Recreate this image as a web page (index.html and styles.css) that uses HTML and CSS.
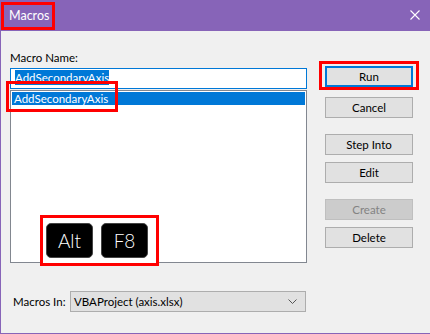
FILE: index.html
```html
<!DOCTYPE html>
<html>
<head>
    <title>Macros</title>
    <link rel="stylesheet" href="styles.css">
</head>
<body>
    <div class="window">
        <div class="titlebar">
            <span class="title">Macros</span>
            <svg class="close" width="10" height="10" viewBox="0 0 10 10">
                <path d="M0.5 0.5 L9.5 9.5 M9.5 0.5 L0.5 9.5" stroke="#fff" stroke-width="1.1" fill="none"/>
            </svg>
        </div>

        <div class="content">
            <div class="main">
                <div class="left">
                    <div class="field-label">Macro Name:</div>
                    <div class="name-input"><span class="selected-text">AddSecondaryAxis</span></div>
                    <div class="listbox">
                        <div class="list-item selected">AddSecondaryAxis</div>
                        <div class="keys">
                            <span class="key">Alt</span>
                            <span class="key">F8</span>
                        </div>
                    </div>
                    <div class="item-mark"></div>
                </div>

                <div class="buttons">
                    <div class="run-mark">
                        <div class="btn default">Run</div>
                    </div>
                    <div class="btn">Cancel</div>
                    <div class="btn group">Step Into</div>
                    <div class="btn">Edit</div>
                    <div class="btn group disabled">Create</div>
                    <div class="btn">Delete</div>
                </div>
            </div>

            <div class="macros-in">
                <span class="in-label">Macros In:</span>
                <div class="combo">
                    <span>VBAProject (axis.xlsx)</span>
                    <svg class="chevron" width="9" height="5" viewBox="0 0 9 5">
                        <path d="M0.5 0.5 L4.5 4.5 L8.5 0.5" stroke="#555" stroke-width="1" fill="none"/>
                    </svg>
                </div>
            </div>
        </div>
    </div>
</body>
</html>
```

FILE: styles.css
```css
body {
    margin: 0;
    font-family: "Lato", "Noto Sans", sans-serif;
    font-size: 11.5px;
    color: #000;
}
.window {
    width: 430px;
    height: 334px;
    box-sizing: border-box;
    background: #f0f0f0;
    border-left: 1px solid #8764b8;
    border-bottom: 1px solid #8764b8;
}
.titlebar {
    height: 31px;
    background: #8764b8;
    display: flex;
    justify-content: space-between;
    align-items: center;
}
.title {
    box-sizing: border-box;
    width: 54px;
    height: 28px;
    margin-top: 2px;
    padding-left: 5px;
    border: 3px solid #ff0000;
    color: #fff;
    font-size: 12.5px;
    line-height: 21px;
    align-self: flex-start;
}
.close {
    margin-right: 10px;
    margin-top: -1px;
}
.content {
    padding: 0 17px 0 9px;
}
.main {
    display: flex;
    gap: 18px;
}
.left {
    width: 297px;
    position: relative;
}
.field-label {
    margin-top: 19px;
    line-height: 16px;
}
.name-input {
    margin-top: 2px;
    height: 21px;
    box-sizing: border-box;
    border: 1px solid #0078d7;
    background: #fff;
    padding: 2px 0 0 4px;
    line-height: 14px;
}
.selected-text {
    background: #0078d7;
    color: #fff;
    padding: 1px 0;
}
.listbox {
    position: relative;
    margin-top: 1px;
    height: 173px;
    box-sizing: border-box;
    border: 1px solid #828790;
    background: #fff;
    padding: 1px;
}
.list-item {
    height: 13px;
    line-height: 13px;
    padding-left: 2px;
}
.list-item.selected {
    background: #0078d7;
    color: #fff;
}
.item-mark {
    position: absolute;
    left: -4px;
    top: 50px;
    width: 112px;
    height: 31px;
    box-sizing: border-box;
    border: 3px solid #ff0000;
}
.keys {
    position: absolute;
    left: 29px;
    top: 124px;
    width: 119px;
    height: 51px;
    box-sizing: border-box;
    border: 3px solid #ff0000;
    background: #fff;
    display: flex;
    gap: 8px;
    padding: 5px 0 0 3px;
}
.key {
    width: 47px;
    height: 35px;
    box-sizing: border-box;
    background: #000;
    border: 1px solid #444;
    border-radius: 5px;
    color: #fff;
    font-family: "Lato", "DejaVu Sans", sans-serif;
    font-weight: 300;
    font-size: 19px;
    line-height: 33px;
    text-align: center;
}
.buttons {
    width: 88px;
    margin-top: 35px;
    display: flex;
    flex-direction: column;
    gap: 7px;
}
.run-mark {
    margin: -5px -6px 0 -6px;
    padding: 2px 3px 0 3px;
    border: 3px solid #ff0000;
    height: 29px;
    box-sizing: border-box;
}
.btn {
    height: 21px;
    box-sizing: border-box;
    background: #e1e1e1;
    border: 1px solid #adadad;
    text-align: center;
    line-height: 19px;
}
.btn.default {
    border: 2px solid #0078d7;
    line-height: 17px;
}
.btn.group {
    margin-top: 9px;
}
.btn.disabled {
    background: #cccccc;
    border-color: #bfbfbf;
    color: #838383;
}
.macros-in {
    display: flex;
    align-items: center;
    margin-top: 28px;
}
.in-label {
    width: 57px;
    padding-left: 3px;
}
.combo {
    width: 236px;
    height: 21px;
    box-sizing: border-box;
    background: #e1e1e1;
    border: 1px solid #adadad;
    display: flex;
    align-items: center;
    justify-content: space-between;
    padding: 0 8px 0 3px;
}
```
